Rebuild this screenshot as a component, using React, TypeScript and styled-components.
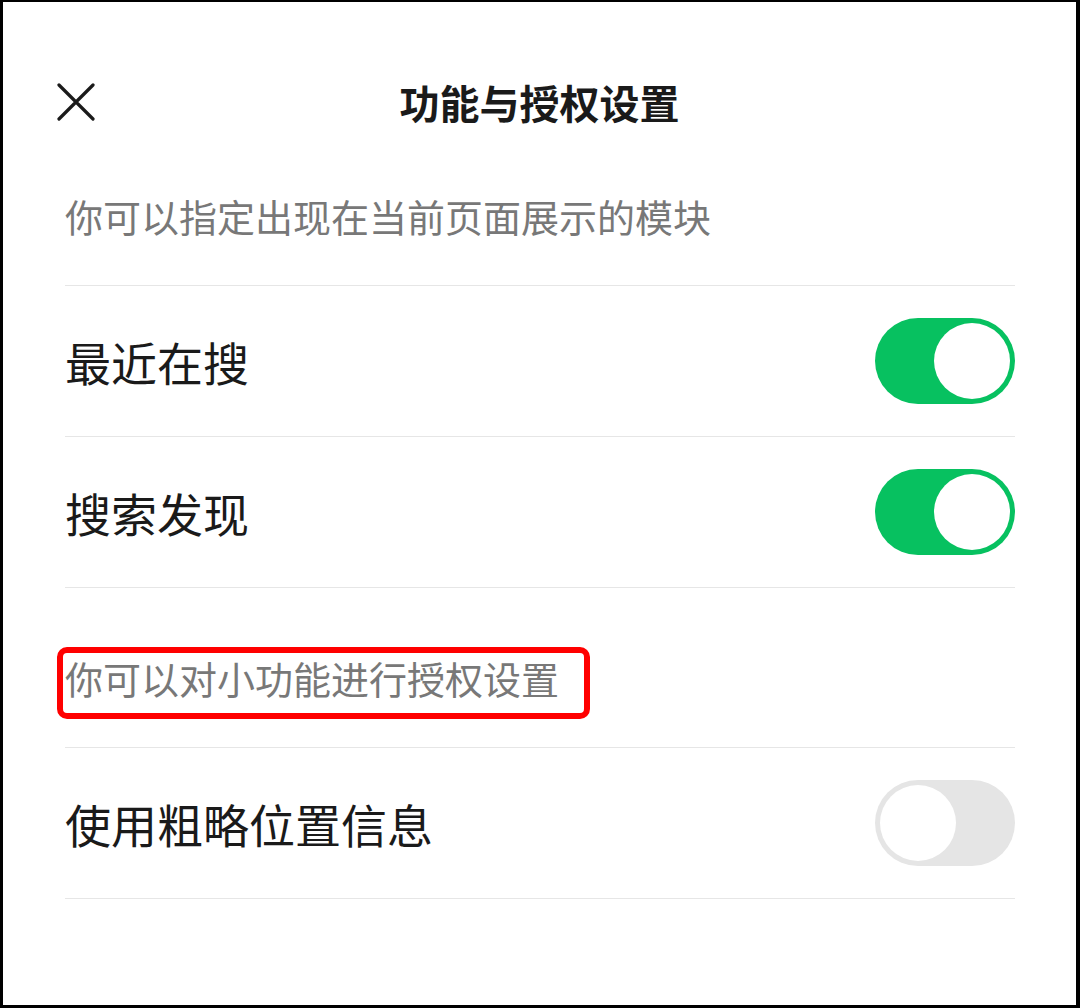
import styled, { createGlobalStyle } from 'styled-components';

const GlobalStyle = createGlobalStyle`
  html, body {
    margin: 0;
    padding: 0;
    background: #fff;
  }
  body {
    font-family: "Noto Sans CJK SC", "Noto Sans", sans-serif;
  }
`;

const Frame = styled.div`
  box-sizing: border-box;
  width: 1080px;
  height: 1008px;
  border-style: solid;
  border-color: #000;
  border-width: 2px 4px 3px 3px;
  background-color: #fff;
  display: flex;
  flex-direction: column;
`;

const Header = styled.div`
  display: grid;
  grid-template-columns: 1fr auto 1fr;
  align-items: center;
  height: 60px;
  margin-top: 70px;
  padding: 0 54px;
`;

const CloseButton = styled.button`
  width: 38px;
  height: 38px;
  padding: 0;
  border: none;
  background: none;
  display: flex;
  align-items: center;
  justify-content: center;
  cursor: pointer;
`;

const Title = styled.h1`
  margin: 0;
  font-size: 40px;
  line-height: 60px;
  font-weight: 700;
  color: #1a1a1a;
`;

const List = styled.div`
  display: flex;
  flex-direction: column;
  padding: 0 61px 0 62px;
`;

const SectionLabel = styled.div<{ $top: number }>`
  position: relative;
  padding: ${(p) => p.$top}px 0 49px 0;
  font-size: 38px;
  line-height: 40px;
  color: #787878;
  border-bottom: 1px solid #e6e6e6;
`;

const LabelText = styled.span`
  position: relative;
  display: inline-block;
`;

const Highlight = styled.span`
  position: absolute;
  left: -8px;
  top: -11px;
  width: 533px;
  height: 72px;
  box-sizing: border-box;
  border: 6px solid #ff0000;
  border-radius: 10px;
  pointer-events: none;
`;

const Row = styled.div`
  display: flex;
  align-items: center;
  justify-content: space-between;
  height: 150px;
  border-bottom: 1px solid #e6e6e6;
`;

const RowLabel = styled.span`
  font-size: 46px;
  line-height: 1;
  color: #1a1a1a;
`;

const Track = styled.button<{ $on: boolean }>`
  position: relative;
  width: 140px;
  height: 86px;
  padding: 0;
  border: none;
  border-radius: 43px;
  background-color: ${(p) => (p.$on ? '#07c160' : '#e5e5e5')};
  cursor: pointer;
`;

const Knob = styled.span<{ $on: boolean }>`
  position: absolute;
  top: 5px;
  left: ${(p) => (p.$on ? '59px' : '5px')};
  width: 76px;
  height: 76px;
  border-radius: 50%;
  background-color: #fff;
`;

const Toggle = ({ on }: { on: boolean }) => (
  <Track $on={on} aria-pressed={on}>
    <Knob $on={on} />
  </Track>
);

const CloseIcon = () => (
  <svg width="38" height="38" viewBox="0 0 38 38">
    <path
      d="M2 2 L36 36 M36 2 L2 36"
      stroke="#1a1a1a"
      strokeWidth="3.2"
      strokeLinecap="round"
    />
  </svg>
);

const App = () => {
  return (
    <>
      <GlobalStyle />
      <Frame>
        <Header>
          <CloseButton aria-label="关闭">
            <CloseIcon />
          </CloseButton>
          <Title>功能与授权设置</Title>
          <span />
        </Header>
        <List>
          <SectionLabel $top={64}>
            <LabelText>你可以指定出现在当前页面展示的模块</LabelText>
          </SectionLabel>
          <Row>
            <RowLabel>最近在搜</RowLabel>
            <Toggle on />
          </Row>
          <Row>
            <RowLabel>搜索发现</RowLabel>
            <Toggle on />
          </Row>
          <SectionLabel $top={70}>
            <LabelText>
              你可以对小功能进行授权设置
              <Highlight />
            </LabelText>
          </SectionLabel>
          <Row>
            <RowLabel>使用粗略位置信息</RowLabel>
            <Toggle on={false} />
          </Row>
        </List>
      </Frame>
    </>
  );
};

export default App;
